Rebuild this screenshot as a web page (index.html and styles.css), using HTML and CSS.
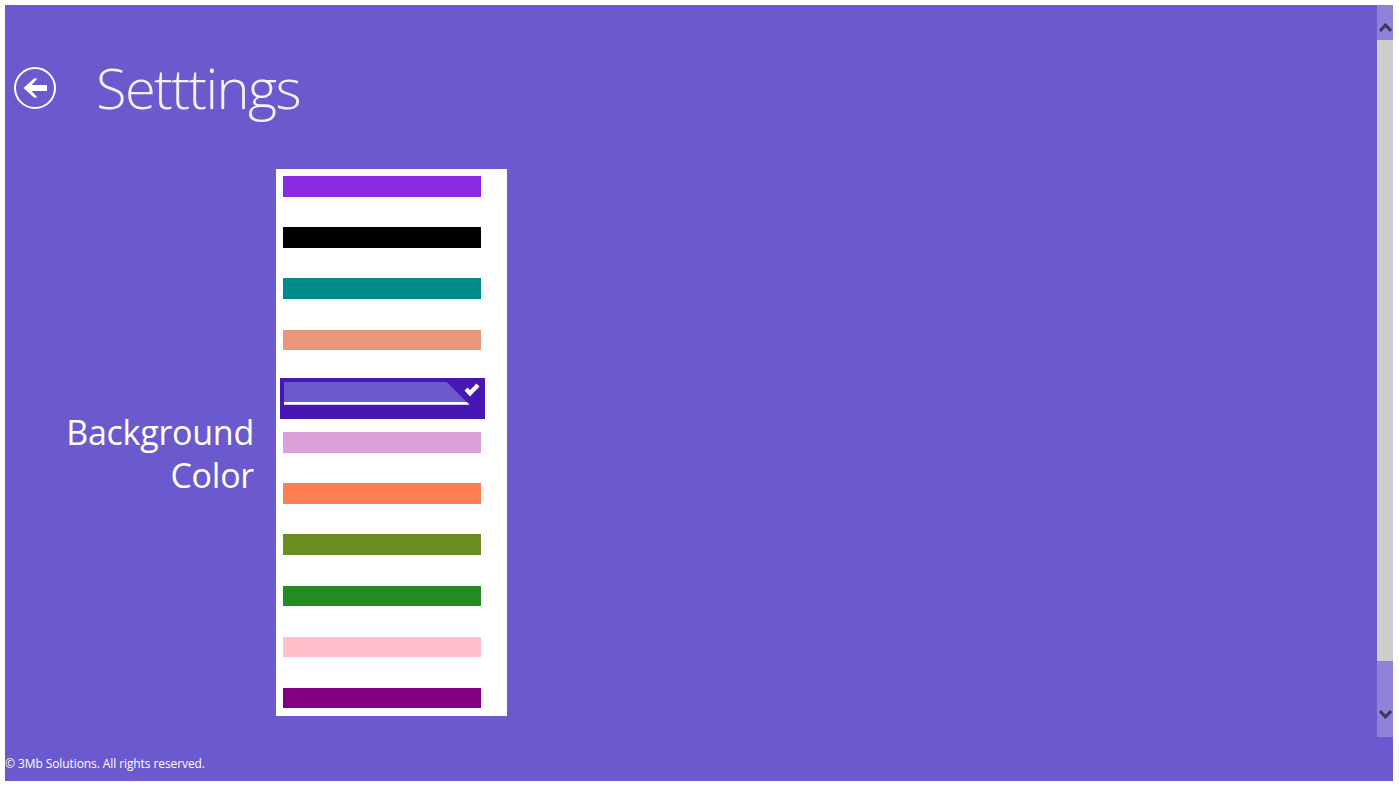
FILE: index.html
```html
<!DOCTYPE html>
<html lang="en">
<head>
  <meta charset="UTF-8" />
  <title>Settings</title>
  <link rel="stylesheet" href="styles.css">
</head>
<body>

<div class="app">
  <div class="main">

    <!-- Page header -->
    <div class="page-header">
      <button class="back-button" aria-label="Back">
        <svg width="42" height="42" viewBox="0 0 42 42">
          <circle cx="21" cy="21" r="20" fill="none" stroke="#fff" stroke-width="2"/>
          <path d="M9.5 21 L20 11.5 L23.5 11.5 L17.5 18 L33 18 L33 24 L17.5 24 L23.5 30.5 L20 30.5 Z" fill="#fff"/>
        </svg>
      </button>
      <h1 class="page-title">Setttings</h1>
    </div>

    <!-- Background colour picker -->
    <div class="setting-row">
      <div class="setting-label">Background<br>Color</div>
      <div class="color-list">
        <div class="swatch blueviolet"></div>
        <div class="swatch black"></div>
        <div class="swatch darkcyan"></div>
        <div class="swatch darksalmon"></div>
        <div class="swatch-selected">
          <div class="swatch-selected-fill"></div>
          <svg class="check" width="16" height="14" viewBox="0 0 16 14">
            <path d="M0.5 7.5 L3.5 4.5 L6 7 L12.5 0.5 L15.5 3.5 L6 13.5 Z" fill="#fff"/>
          </svg>
        </div>
        <div class="swatch plum"></div>
        <div class="swatch coral"></div>
        <div class="swatch olivedrab"></div>
        <div class="swatch forestgreen"></div>
        <div class="swatch pink"></div>
        <div class="swatch purple"></div>
      </div>
    </div>

    <div class="footer">&copy; 3Mb Solutions. All rights reserved.</div>
  </div>

  <!-- Scrollbar -->
  <div class="scrollbar">
    <div class="scroll-button">
      <svg width="13" height="9" viewBox="0 0 13 9"><path d="M1 8 L6.5 2 L12 8" fill="none" stroke="#3c3a5c" stroke-width="3"/></svg>
    </div>
    <div class="scroll-thumb"></div>
    <div class="scroll-button scroll-button-down">
      <svg width="13" height="9" viewBox="0 0 13 9"><path d="M1 1 L6.5 7 L12 1" fill="none" stroke="#3c3a5c" stroke-width="3"/></svg>
    </div>
  </div>
</div>

</body>
</html>
```

FILE: styles.css
```css
html, body {
  margin: 0;
  padding: 0;
  height: 100%;
  overflow: hidden;
  background-color: #fff;
}

body {
  padding: 5px 5px 6px 5px;
  box-sizing: border-box;
  font-family: 'Open Sans', 'Noto Sans', sans-serif;
  color: #fff;
}

.app {
  display: flex;
  width: 1388px;
  height: 776px;
  background-color: #6a5acd;
}

.main {
  flex: 1;
  display: flex;
  flex-direction: column;
}

.page-header {
  display: flex;
  align-items: center;
  height: 164px;
  padding: 0 0 0 9px;
}

.back-button {
  width: 42px;
  height: 42px;
  margin: 2px 0 0 0;
  padding: 0;
  background: none;
  border: none;
}

.back-button svg {
  display: block;
}

.page-title {
  margin: 0 0 0 40px;
  font-size: 56px;
  font-weight: 300;
  line-height: 60px;
  letter-spacing: -1.6px;
  opacity: 0.92;
}

.setting-row {
  display: flex;
  align-items: center;
}

.setting-label {
  width: 249px;
  text-align: right;
  font-size: 34px;
  font-weight: 400;
  line-height: 43px;
  letter-spacing: -0.25px;
  margin-top: 23px;
}

.color-list {
  display: flex;
  flex-direction: column;
  gap: 30.6px;
  width: 231.2px;
  height: 547px;
  box-sizing: border-box;
  margin-left: 21.5px;
  padding: 7px 0 0 7px;
  background-color: #fff;
}

.swatch {
  width: 198px;
  height: 20.6px;
}

.blueviolet { background-color: #8a2be2; }
.black { background-color: #000; }
.darkcyan { background-color: #008b8b; }
.darksalmon { background-color: #e9967a; }
.plum { background-color: #dda0dd; }
.coral { background-color: #ff7f50; }
.olivedrab { background-color: #6b8e23; }
.forestgreen { background-color: #228b22; }
.pink { background-color: #ffc0cb; }
.purple { background-color: #800080; }

.swatch-selected {
  position: relative;
  width: 205px;
  height: 41px;
  box-sizing: border-box;
  margin: -3px 0 -17.4px -3px;
  padding: 4px;
  background-color: #4617b4;
}

.swatch-selected-fill {
  width: 186px;
  height: 23px;
  box-sizing: border-box;
  background-color: #6a5acd;
  border-bottom: 3px solid #fff;
  clip-path: polygon(0 0, 163px 0, 100% 100%, 0 100%);
}

.check {
  position: absolute;
  top: 5px;
  right: 5px;
}

.footer {
  margin-top: 39px;
  font-size: 12px;
  line-height: 18px;
  letter-spacing: -0.09px;
}

.scrollbar {
  display: flex;
  flex-direction: column;
  width: 16px;
  height: 732px;
  background-color: #8f82d8;
}

.scroll-button {
  display: flex;
  align-items: center;
  justify-content: center;
  height: 35px;
  padding-top: 9px;
  box-sizing: border-box;
}

.scroll-button-down {
  height: 76px;
  padding-top: 30px;
}

.scroll-thumb {
  flex: 1;
  background-color: #cdcdcd;
}
```
